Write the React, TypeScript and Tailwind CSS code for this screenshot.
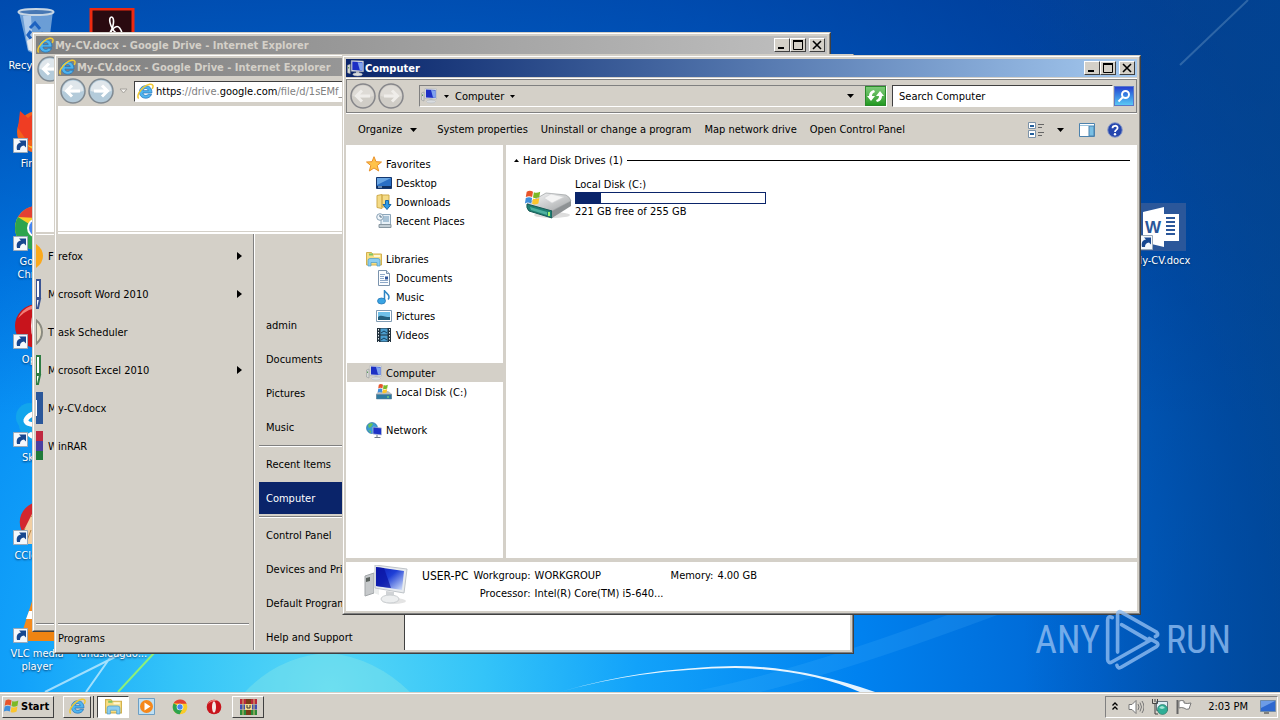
import { ReactNode } from "react";
import clsx from "clsx";

const RAISED =
  "border border-t-white border-l-white border-r-[#404040] border-b-[#404040]";
const SUNKEN =
  "border border-t-[#808080] border-l-[#808080] border-r-white border-b-white";

type IconProps = { size?: number };

const IeIcon = ({ size = 16 }: IconProps) => (
  <svg width={size} height={size} viewBox="0 0 16 16" className="shrink-0">
    <path
      d="M14 9.400H5.600c.2 1.500 1.200 2.300 2.700 2.300 1 0 1.800-.4 2.200-1.100h3.200c-.8 2.400-2.900 3.700-5.500 3.700-3.500 0-5.900-2.400-5.900-5.800s2.400-5.900 5.900-5.900c3.700 0 6 2.600 5.800 6.800zM5.700 7.200h4.900C10.400 5.900 9.500 5.200 8.200 5.200S5.900 5.900 5.700 7.200z"
      fill="#4fb4ee"
      stroke="#1f74bd"
      strokeWidth=".7"
    />
    <path
      d="M1.600 14.600C-.5 12.500 2.200 7 6.800 3.600 10.300 1 14.300.2 15 2.300c.3.900 0 2-.7 3.200"
      fill="none"
      stroke="#f0c832"
      strokeWidth="1.400"
    />
  </svg>
);

const ComputerIcon = ({ size = 16 }: IconProps) => (
  <svg width={size} height={size} viewBox="0 0 32 32" className="shrink-0">
    <path d="M1 10l5-2v18l-5-2z" fill="#d8dad8" stroke="#8b8e90" />
    <path d="M2 13h2v3H2z" fill="#5c9c5c" />
    <path d="M8 1l23 1v20L8 21z" fill="#dfe3e8" stroke="#a5acb5" />
    <path d="M10 3l19 1v16l-19-1z" fill="#1c2fc4" />
    <path d="M20 4l9 1v15l-5-1z" fill="#7fa2ee" />
    <path d="M17 21h6v4h-6z" fill="#b8bcc2" />
    <ellipse cx="20" cy="27" rx="9" ry="3" fill="#d9dcdf" stroke="#b1b5ba" />
  </svg>
);

const BigComputerIcon = () => (
  <svg width="44" height="40" viewBox="0 0 44 40" className="shrink-0">
    <defs>
      <linearGradient id="screen" x1="0" y1="0" x2="1" y2="1">
        <stop offset="0" stopColor="#0d1bb4" />
        <stop offset=".45" stopColor="#1e3fd6" />
        <stop offset="1" stopColor="#dbe8fb" />
      </linearGradient>
    </defs>
    <ellipse cx="30" cy="36" rx="12" ry="3" fill="#e4e4e4" />
    <path d="M1 11l9-3v20l-9 3z" fill="#c6c9cb" stroke="#a1a5a8" />
    <path d="M10 8l5 1v21l-5-2z" fill="#eceeee" />
    <path d="M2 13l4-1v4l-4 1z" fill="#59605d" />
    <path d="M11 0l32 4-3 24-29-5z" fill="#e8ebee" stroke="#bfc4c9" />
    <path d="M12 2l28 4-2 19-26-4z" fill="url(#screen)" />
    <path d="M12 2l8 1 7 20-15-2z" fill="#0a12a0" opacity=".7" />
    <path d="M22 26l8 1v6h-8z" fill="#d0d3d6" />
    <ellipse cx="26" cy="34" rx="9" ry="4" fill="#eceeef" stroke="#c9cdd0" />
  </svg>
);

const FlagShape = () => (
  <g>
    <path d="M3 3C6 1 8 2 10 3L9 9C7 8 5 7.500 2 9z" fill="#e8542a" />
    <path d="M11 3.500c2 1 4 1 7-.500l-1 6c-3 1.500-5 1.500-7 .500z" fill="#7cb928" />
    <path d="M2 10c3-1.500 5-1 7 0l-1 6c-2-1-4-1.500-7 0z" fill="#3f8fdc" />
    <path d="M10 10.500c2 1 4 1 7-.500l-1 6c-3 1.500-5 1.500-7 .500z" fill="#fcc52c" />
  </g>
);

const DriveIcon = () => (
  <svg width="48" height="30" viewBox="0 0 48 30" className="shrink-0">
    <defs>
      <linearGradient id="case" x1="0" y1="0" x2="1" y2="1">
        <stop offset="0" stopColor="#fafafa" />
        <stop offset="1" stopColor="#a2a5a7" />
      </linearGradient>
    </defs>
    <ellipse cx="28" cy="26" rx="18" ry="3" fill="#ddd" />
    <path d="M3 15L22 4l20 2q4 2 5 6L28 22z" fill="url(#case)" stroke="#9a9d9f" strokeWidth=".7" />
    <path d="M20 9l7-4 13 3-12 6z" fill="#f4f4f4" stroke="#d2d4d5" strokeWidth=".6" />
    <path d="M3 15l25 7v7L5 22Q2 19 3 15z" fill="#1f7f73" stroke="#155a55" />
    <path d="M28 22l19-10v5L28 29z" fill="#8e9294" />
    <path d="M6 18l17 5v3L7 21z" fill="#4fb09f" />
    <path d="M25 23v4" stroke="#9df36c" strokeWidth="2" />
    <g transform="scale(.9)">
      <FlagShape />
    </g>
  </svg>
);

const MiniDriveIcon = () => (
  <svg width="16" height="16" viewBox="0 0 16 16" className="shrink-0">
    <path d="M0 10l3-3h9l4 3v5H0z" fill="#b9bec2" />
    <path d="M.5 10.500h15v4.500H.500z" fill="#2e7aa0" stroke="#5f7f95" strokeWidth=".5" />
    <path d="M11 13h2" stroke="#8ef06a" />
    <g transform="translate(1 -1) scale(.6)">
      <FlagShape />
    </g>
  </svg>
);

const StarIcon = () => (
  <svg width="16" height="16" viewBox="0 0 16 16" className="shrink-0">
    <path
      d="M8 .700l2 5 5.500.300-4.300 3.500L12.700 15 8 12l-4.700 3 1.500-5.500L.500 6 6 5.700z"
      fill="#ffc34a"
      stroke="#e8912a"
    />
  </svg>
);

const DesktopIcon = () => (
  <svg width="16" height="16" viewBox="0 0 16 16" className="shrink-0">
    <path d="M.5 2.500h15v11H.500z" fill="#2a6fc4" stroke="#14376f" />
    <path d="M1 3h14L1 10z" fill="#6aa6e3" />
    <path d="M1 11h14v2H1z" fill="#11305f" />
    <path d="M2 12h4" stroke="#bfe2ff" />
  </svg>
);

const DownloadsIcon = () => (
  <svg width="16" height="16" viewBox="0 0 16 16" className="shrink-0">
    <path d="M1 1.500l5-1v14l-5-1zM6 1h7v12H6z" fill="#f4db87" stroke="#cfab4b" />
    <path d="M9.500 6.500h3v4h2.500L11 15.500 7 10.500h2.500z" fill="#2f9be6" stroke="#1767a8" />
  </svg>
);

const RecentIcon = () => (
  <svg width="16" height="16" viewBox="0 0 16 16" className="shrink-0">
    <path d="M5 1.500h9.500v10H5z" fill="#e7f0f7" stroke="#8ca6ba" />
    <path d="M7 4h6M7 6h6M7 8h6" stroke="#6b95b5" />
    <path d="M3 11.500h12v3H3z" fill="#c2cdd4" stroke="#8796a0" />
    <circle cx="4" cy="4" r="3.300" fill="#f1f6fa" stroke="#8aa3b5" />
    <path d="M4 2v2h2" stroke="#55738a" fill="none" />
  </svg>
);

const FolderIcon = ({ size = 16 }: IconProps) => (
  <svg width={size} height={size} viewBox="0 0 16 16" className="shrink-0">
    <path d="M.5 1.500h5l1 1.500h9v11H.500z" fill="#f6dd83" stroke="#d3b14e" />
    <path d="M3 2.500h4v2H3z" fill="#7fc463" />
    <path d="M8 4h6v2H8z" fill="#fff6d2" />
    <path
      d="M2 15V9.500Q2 7.500 4 7.500h8q2 0 2 2V15h-3v-3.500H5V15z"
      fill="#8ccdf0"
      stroke="#4b9bc8"
      strokeWidth=".7"
    />
  </svg>
);

const DocumentIcon = () => (
  <svg width="16" height="16" viewBox="0 0 16 16" className="shrink-0">
    <path d="M2.500.500h8l3 3v12h-11z" fill="#fbfdff" stroke="#7b93ad" />
    <path d="M10.500.500v3h3" fill="#d6e2ee" stroke="#7b93ad" />
    <path d="M4 4.500h5M4 6.500h4M4 8.500h4M4 10.500h8M4 12.500h8" stroke="#8fa9c8" />
    <path d="M9 6.500h3v3H9z" fill="#2e559a" />
  </svg>
);

const MusicIcon = () => (
  <svg width="16" height="16" viewBox="0 0 16 16" className="shrink-0">
    <path
      d="M8.500 12V1c.5 3 4.500 3.500 4.500 7 0 1-.5 2-1 2.500"
      fill="none"
      stroke="#2f86c4"
      strokeWidth="1.500"
    />
    <ellipse cx="5.500" cy="12" rx="4" ry="3" fill="#39a4e4" stroke="#1e6fae" strokeWidth=".7" />
  </svg>
);

const PictureIcon = () => (
  <svg width="16" height="16" viewBox="0 0 16 16" className="shrink-0">
    <path d="M.5 2.500h15v11H.500z" fill="#fff" stroke="#7f9bb3" />
    <path d="M2 4h12v8H2z" fill="#6fc0e8" />
    <path d="M2 9c3-3 6 0 12 0v3H2z" fill="#235f7d" />
  </svg>
);

const VideoIcon = () => (
  <svg width="16" height="16" viewBox="0 0 16 16" className="shrink-0">
    <path d="M1 1h14v14H1z" fill="#20303c" />
    <path d="M4.500 1.500h7v6h-7zM4.500 8.500h7v6h-7z" fill="#4c9ed0" />
    <path d="M5 6l3-2 3 2M5 13l3-2 3 2" stroke="#173f5c" fill="none" />
    <path d="M2.500 2v13M13.500 2v13" stroke="#e8eef2" strokeDasharray="1.500 1.500" />
  </svg>
);

const NetworkIcon = () => (
  <svg width="16" height="16" viewBox="0 0 16 16" className="shrink-0">
    <circle cx="6" cy="6" r="5.500" fill="#3a9bd4" stroke="#20669c" strokeWidth=".6" />
    <path d="M2 3c2-2 4-2 5-1L5 5 3 6zM2 8l3 1v2z" fill="#67c05b" />
    <path d="M7 5l8.500 1v7L7 12z" fill="#1e33c8" stroke="#b7c2d5" strokeWidth=".7" />
    <path d="M11 13v2M8.500 15.500h6" stroke="#6c7685" />
  </svg>
);

const WordShape = () => (
  <g>
    <path d="M26 11h15v27H26z" fill="#fff" />
    <path d="M28 15h9M28 19h9M28 23h9M28 27h9M28 31h9" stroke="#2b579a" strokeWidth="2" />
    <path d="M5 9l21-5v40L5 39z" fill="#fff" />
    <text x="7" y="30" fontSize="17" fontWeight="700" fill="#2b579a" fontFamily="Liberation Sans, sans-serif">
      W
    </text>
  </g>
);

const ShortcutArrow = () => (
  <g>
    <path d="M.5 32.500h14v14h-14z" fill="#f4f8fc" stroke="#9aa9b8" />
    <path d="M4 44c-1-5 1-7 4-7.500L6 34.500h7v7l-2-2c-3 .5-4 2-4 4.500z" fill="#17478f" />
  </g>
);

const shapes: Record<string, ReactNode> = {
  recycle: (
    <g>
      <path d="M6 4l34-1-5 40q-11 6-20 0z" fill="#8fb8e2" opacity=".75" />
      <path d="M10 8l8 0 2 34-5 0z" fill="#d8e8f8" opacity=".6" />
      <ellipse cx="23" cy="4" rx="17.500" ry="3" fill="#4878b4" stroke="#c7d6e4" strokeWidth="2" />
      <path d="M17 20l5-5 5 6M28 24l2 7-7 1M19 32l-4-5 3-4" fill="none" stroke="#1d62c0" strokeWidth="3" />
      <path d="M14 33l5-3 14 2 1 10q-10 6-18 0z" fill="#e7eaee" />
    </g>
  ),
  adobe: (
    <g>
      <path d="M3 1h42v45H3z" fill="#2a0a10" stroke="#ee2a10" strokeWidth="3" />
      <path
        d="M22 25C27 16 26 9 23.500 9S20.500 15 26 23"
        fill="none"
        stroke="#fff"
        strokeWidth="1.600"
      />
      <path d="M22 25q-8 5-8 9t8-9 12 0q-4 3-8-2" fill="none" stroke="#fff" strokeWidth="1.600" />
    </g>
  ),
  firefox: (
    <g>
      <circle cx="25" cy="26" r="21" fill="#f4611c" />
      <path d="M5 22L7 5l8 7 6-5 2 12 10-3v14L14 35z" fill="#ef3d23" />
      <path d="M12 38q20 10 32-14-3 22-20 22z" fill="#ffc52f" />
      <circle cx="28" cy="25" r="9" fill="#6a36b5" />
    </g>
  ),
  chrome: (
    <g>
      <circle cx="24" cy="24" r="22" fill="#f9cb28" />
      <path d="M5 13A22 22 0 0 1 44 14H24z" fill="#e34133" />
      <path d="M5 13A22 22 0 0 0 23 46l8-15-7-6z" fill="#2da44e" />
      <circle cx="24" cy="24" r="10" fill="#fff" />
      <circle cx="24" cy="24" r="8" fill="#4586f0" />
    </g>
  ),
  opera: (
    <g>
      <circle cx="24" cy="24" r="22" fill="#c8141c" />
      <path d="M5 16a22 22 0 0 1 30-11Q16 4 5 16z" fill="#f27d76" />
      <ellipse cx="24" cy="24" rx="6" ry="17" fill="#f5e9e6" />
    </g>
  ),
  skype: (
    <g>
      <circle cx="17" cy="17" r="14" fill="#12a5ec" />
      <circle cx="31" cy="31" r="14" fill="#12a5ec" />
      <circle cx="24" cy="24" r="18" fill="#12a5ec" />
      <path d="M33 16Q22 10 15 17t9 8 6 8-14 0" fill="none" stroke="#fff" strokeWidth="5" />
    </g>
  ),
  ccleaner: (
    <g>
      <path d="M40 9A20 20 0 1 0 40 39L33 32A10 10 0 1 1 33 16z" fill="#d3272f" />
      <path d="M20 14l14 8-6 24H4z" fill="#f1cfa4" />
      <path d="M18 18l13 8M12 30l-6 14M18 32l-5 13" stroke="#b98648" />
    </g>
  ),
  vlc: (
    <g>
      <path d="M20 2h8l12 38H8z" fill="#f58a1c" />
      <path d="M16 15h16l3 8H13z" fill="#fff" />
      <path d="M3 36h42l2 9H1z" fill="#ef8412" />
    </g>
  ),
  blank: <path d="M10 2h28v42H10z" fill="#eef3f8" />,
  word: (
    <g>
      <path d="M0 0h48v48H0z" fill="#2b579a" />
      <WordShape />
    </g>
  ),
};

const AppIcon = ({ name, size = 48, shortcut = false }: { name: string; size?: number; shortcut?: boolean }) => (
  <svg width={size} height={size} viewBox="0 0 48 48" className="shrink-0">
    {shapes[name]}
    {shortcut && <ShortcutArrow />}
  </svg>
);

const DesktopShortcut = ({ icon, label, shortcut = true }: { icon: string; label: string; shortcut?: boolean }) => (
  <button type="button" className="flex h-[98px] w-[74px] flex-col items-center gap-[3px] text-white">
    <AppIcon name={icon} shortcut={shortcut} />
    <span className="w-[72px] text-center leading-[13px] [text-shadow:0_1px_2px_#003060]">{label}</span>
  </button>
);

const Wallpaper = () => (
  <svg
    viewBox="0 0 1280 692"
    preserveAspectRatio="none"
    className="absolute inset-0 h-full w-full"
    aria-hidden="true"
  >
    <defs>
      <radialGradient id="sky" gradientUnits="userSpaceOnUse" cx="330" cy="690" r="1100">
        <stop offset="0" stopColor="#58d8f6" />
        <stop offset=".14" stopColor="#34c4f8" />
        <stop offset=".28" stopColor="#12a2fa" />
        <stop offset=".48" stopColor="#0082f0" />
        <stop offset=".7" stopColor="#0064d0" />
        <stop offset=".86" stopColor="#004eac" />
        <stop offset="1" stopColor="#0a488c" />
      </radialGradient>
      <linearGradient id="shade" x1="0" y1="0" x2="0" y2="1">
        <stop offset="0" stopColor="#003a98" stopOpacity=".6" />
        <stop offset=".6" stopColor="#003a98" stopOpacity="0" />
      </linearGradient>
      <linearGradient id="edge" x1="0" y1="0" x2="1" y2="0">
        <stop offset=".8" stopColor="#004490" stopOpacity="0" />
        <stop offset="1" stopColor="#004490" stopOpacity=".6" />
      </linearGradient>
    </defs>
    <path d="M0 0h1280v692H0z" fill="url(#sky)" />
    <path d="M0 0h1280v692H0z" fill="url(#shade)" />
    <path d="M0 0h1280v692H0z" fill="url(#edge)" />
    <path d="M245 692Q280 655 330 653Q375 658 410 692z" fill="#a0f0e0" opacity=".3" />
    <path d="M45 692L125 652M86 692L112 655" stroke="#d8f4ff" strokeWidth="2" opacity=".7" />
    <path d="M118 692L155 652" stroke="#8cf07a" strokeWidth="2" />
    <path d="M700 690Q800 670 950 614L1000 614Q850 670 760 692z" fill="#5cc0ff" opacity=".15" />
    <path
      d="M560 692Q640 668 735 666Q800 666 878 693L862 693Q810 669 735 668Q640 669 560 692z"
      fill="#fff"
      opacity=".9"
    />
    <path d="M1180 65L1248 0" stroke="#6f9cc8" strokeWidth="2" opacity=".4" />
  </svg>
);

const TitleButton = ({ label, children }: { label: string; children: ReactNode }) => (
  <button
    type="button"
    aria-label={label}
    className={clsx("flex h-[14px] w-[16px] items-center justify-center bg-[#d4d0c8]", RAISED)}
  >
    <svg width="12" height="12" viewBox="0 0 12 12" fill="none" stroke="#000">
      {children}
    </svg>
  </button>
);

type WindowProps = {
  title: string;
  icon: ReactNode;
  active?: boolean;
  className: string;
  children: ReactNode;
};

const Window = ({ title, icon, active = false, className, children }: WindowProps) => (
  <section
    className={clsx(
      "absolute flex flex-col border border-t-[#d4d0c8] border-r-[#404040] border-b-[#404040] border-l-[#d4d0c8]",
      className,
    )}
  >
    <div className="flex min-h-0 flex-1 flex-col border border-t-white border-r-[#808080] border-b-[#808080] border-l-white bg-[#d4d0c8] p-[2px]">
      <header
        className={clsx(
          "flex h-[18px] shrink-0 items-center gap-[1px] pr-[2px] pl-[1px] font-bold",
          active
            ? "bg-linear-to-r from-[#0a246a] to-[#a6caf0] text-white"
            : "bg-linear-to-r from-[#808080] to-[#c0c0c0] text-[#d4d0c8]",
        )}
      >
        {icon}
        <h2 className="flex-1 whitespace-nowrap">{title}</h2>
        <div className="flex">
          <TitleButton label="Minimize">
            <path d="M2 9h6" strokeWidth="2" />
          </TitleButton>
          <TitleButton label="Maximize">
            <path d="M1.500 2v8.500h9V2" />
            <path d="M1 2h10" strokeWidth="2" />
          </TitleButton>
        </div>
        <div className="pl-[2px]">
          <TitleButton label="Close">
            <path d="M2 2l8 8M10 2l-8 8" strokeWidth="1.600" />
          </TitleButton>
        </div>
      </header>
      {children}
    </div>
  </section>
);

const RoundButton = ({ label, back = false, muted = false }: { label: string; back?: boolean; muted?: boolean }) => (
  <button type="button" aria-label={label} className="shrink-0">
    <svg width="28" height="28" viewBox="0 0 28 28" fill="none">
      <circle
        cx="14"
        cy="14"
        r="12"
        fill={muted ? "#d0cdc7" : "#b4cbda"}
        stroke={muted ? "#86868a" : "#808a92"}
        strokeWidth="1.500"
      />
      <path d="M3.500 14a10.500 10.500 0 0 1 21 0q-10 3-21 0z" fill={muted ? "#dedbd6" : "#dfe6eb"} />
      <path
        d={back ? "M21 14H8M13 8.500L7.500 14l5.500 5.500" : "M7 14h13M15 8.500l5.500 5.500-5.500 5.500"}
        stroke={muted ? "#efedea" : "#fff"}
        strokeWidth="3"
      />
    </svg>
  </button>
);

const Caret = () => (
  <svg width="7" height="4" viewBox="0 0 7 4" className="shrink-0">
    <path d="M0 0h7L3.500 4z" />
  </svg>
);

const SmallCaret = () => (
  <svg width="5" height="3" viewBox="0 0 5 3" className="shrink-0">
    <path d="M0 0h5L2.500 3z" />
  </svg>
);

// The menu is painted across two windows: the back one keeps the icons and
// first letters, the front one keeps the rest of each name.
const recentPrograms = [
  { name: "refox", more: true },
  { name: "crosoft Word 2010", more: true },
  { name: "ask Scheduler", more: false },
  { name: "crosoft Excel 2010", more: true },
  { name: "y-CV.docx", more: false },
  { name: "inRAR", more: false },
];

const stripItems = [
  { letter: "F", art: <path d="M0 4q7 5 7 12T0 28z" fill="#fba91c" /> },
  { letter: "M", art: <path d="M0 2h4v18H0zM0 21h4l-2 9H0z" fill="#fff" stroke="#3a5493" strokeWidth="2" /> },
  { letter: "T", art: <path d="M0 4q6 5 6 12T0 28z" fill="#e8e1c8" stroke="#8a8a80" strokeWidth="2" /> },
  { letter: "M", art: <path d="M0 2h4v18H0zM0 21h4l-2 9H0z" fill="#fff" stroke="#2f7d43" strokeWidth="2" /> },
  {
    letter: "M",
    art: (
      <g>
        <path d="M0 0h7v32H0z" fill="#2b579a" />
        <path d="M0 8h1v16H0z" fill="#fff" />
      </g>
    ),
  },
  {
    letter: "W",
    art: (
      <g>
        <path d="M0 1h7v10H0z" fill="#c02840" />
        <path d="M0 11h7v10H0z" fill="#4a3fa0" />
        <path d="M0 21h7v9H0z" fill="#1f7a3a" />
      </g>
    ),
  },
];

const places = [
  ["admin", "Documents", "Pictures", "Music"],
  ["Recent Items", "Computer"],
  ["Control Panel", "Devices and Printers", "Default Programs", "Help and Support"],
];

const StartMenu = () => (
  <div className="flex h-[416px] w-[347px] border-r border-[#404040] bg-[#d4d0c8]">
    <div className="flex w-[196px] flex-col border-r border-[#808080]">
      <ul className="flex-1 pt-[3px]">
        {recentPrograms.map(({ name, more }) => (
          <li key={name} className="flex h-[38px] items-center justify-between pr-[11px]">
            <button type="button">{name}</button>
            {more && (
              <svg width="5" height="8" viewBox="0 0 5 8">
                <path d="M0 0l5 4-5 4z" />
              </svg>
            )}
          </li>
        ))}
      </ul>
      <div className="mr-1 h-[27px] border-t border-[#808080] pt-2 shadow-[inset_0_1px_#fff]">
        <button type="button">Programs</button>
      </div>
    </div>
    <div className="flex flex-1 flex-col border-l border-white pt-[75px] pl-1">
      {places.map((group, index) => (
        <ul
          key={index}
          className={clsx(index > 0 && "border-t border-[#808080] pt-[2px] shadow-[inset_0_1px_#fff]")}
        >
          {group.map((place) => (
            <li key={place} className="h-[34px]">
              <button
                type="button"
                className={clsx(
                  "h-8 w-full pl-[7px] text-left",
                  place === "Computer" && "bg-[#0a246a] text-white",
                )}
              >
                {place}
              </button>
            </li>
          ))}
        </ul>
      ))}
    </div>
  </div>
);

const BackBrowser = () => (
  <Window
    title="My-CV.docx - Google Drive - Internet Explorer"
    icon={<IeIcon size={17} />}
    className="top-[32px] left-[32px] h-[600px] w-[799px]"
  >
    <div className="flex h-[30px] shrink-0 items-center">
      <RoundButton label="Back" back />
    </div>
    <div className="h-[148px] shrink-0 bg-white" />
    <div className="mt-[2px] flex flex-1 flex-col border-t border-white pt-[2px]">
      <ul className="flex-1">
        {stripItems.map(({ letter, art }, index) => (
          <li key={index} className="flex h-[38px] items-center gap-[5px]">
            <svg width="7" height="32" viewBox="0 0 7 32" className="shrink-0">
              {art}
            </svg>
            {letter}
          </li>
        ))}
      </ul>
      <div className="h-[5px] border-t border-[#808080] shadow-[inset_0_1px_#fff]" />
    </div>
  </Window>
);

const FrontBrowser = () => (
  <Window
    title="My-CV.docx - Google Drive - Internet Explorer"
    icon={<IeIcon size={17} />}
    className="top-[54px] left-[54px] h-[600px] w-[800px]"
  >
    <nav className="flex h-[30px] shrink-0 items-center pl-[1px]">
      <RoundButton label="Back" back />
      <RoundButton label="Forward" />
      <svg width="19" height="6" viewBox="0 0 19 6" fill="none" stroke="#a5a29c">
        <path d="M5 1h7L8.500 5z" fill="#f2f0ec" />
      </svg>
      <div
        className="flex h-[21px] flex-1 items-center gap-[2px] border border-t-[#404040] border-r-white border-b-white border-l-[#404040] bg-white pl-[2px]"
      >
        <IeIcon size={17} />
        <span className="whitespace-nowrap text-[#808080]">
          <span className="text-black">https</span>://drive.<span className="text-black">google.com</span>
          /file/d/1sEMf_
        </span>
      </div>
    </nav>
    <div className="flex min-h-0 flex-1 flex-col bg-white">
      <div className="h-[125px] shrink-0" />
      <div className="h-[3px] w-[347px] shrink-0 border-t border-[#d4d0c8]" />
      <StartMenu />
    </div>
  </Window>
);

type NavGroup = {
  name: string;
  icon: ReactNode;
  selected?: boolean;
  items: { name: string; icon: ReactNode }[];
};

const navGroups: NavGroup[] = [
  {
    name: "Favorites",
    icon: <StarIcon />,
    items: [
      { name: "Desktop", icon: <DesktopIcon /> },
      { name: "Downloads", icon: <DownloadsIcon /> },
      { name: "Recent Places", icon: <RecentIcon /> },
    ],
  },
  {
    name: "Libraries",
    icon: <FolderIcon />,
    items: [
      { name: "Documents", icon: <DocumentIcon /> },
      { name: "Music", icon: <MusicIcon /> },
      { name: "Pictures", icon: <PictureIcon /> },
      { name: "Videos", icon: <VideoIcon /> },
    ],
  },
  {
    name: "Computer",
    icon: <ComputerIcon />,
    selected: true,
    items: [{ name: "Local Disk (C:)", icon: <MiniDriveIcon /> }],
  },
  { name: "Network", icon: <NetworkIcon />, items: [] },
];

const commands = ["System properties", "Uninstall or change a program", "Map network drive", "Open Control Panel"];

const disk = { name: "Local Disk (C:)", free: 221, total: 255 };

const Explorer = () => (
  <Window
    title="Computer"
    icon={<ComputerIcon size={17} />}
    active
    className="top-[55px] left-[342px] h-[560px] w-[799px]"
  >
    <div className="mt-[1px] flex h-[36px] shrink-0 items-center gap-[5px] border-t border-b border-t-white border-b-white px-[3px] shadow-[inset_0_1px_#808080,inset_0_-1px_#808080,inset_1px_0_#808080,inset_-1px_0_#808080]">
      <div className="flex">
        <RoundButton label="Back" back muted />
        <RoundButton label="Forward" muted />
      </div>
      <div className={clsx("ml-[9px] flex h-[22px] flex-1 items-center pl-[1px]", SUNKEN)}>
        <ComputerIcon />
        <span className="ml-[7px] flex flex-1 items-center gap-[6px]">
          <SmallCaret />
          Computer
          <SmallCaret />
        </span>
        <Caret />
        <button
          type="button"
          aria-label="Refresh"
          className="ml-[11px] flex h-5 w-[21px] items-center justify-center border border-[#2b8a2b] bg-linear-to-b from-[#7ccb78] to-[#1f9a1f]"
        >
          <svg width="17" height="14" viewBox="0 0 17 14" fill="#fff">
            <path d="M0 7h2Q2 2 7 1L8 3Q5 4 5 7h3L4 12zM17 7h-2q0 5-5 6l-1-2q3-1 3-4H9l4-5z" />
          </svg>
        </button>
      </div>
      <div className="flex items-center gap-[1px]">
        <input
          aria-label="Search Computer"
          defaultValue="Search Computer"
          className="h-[22px] w-[221px] border border-t-[#404040] border-r-white border-b-white border-l-[#404040] bg-white px-[6px] outline-none"
        />
        <button
          type="button"
          aria-label="Search"
          className="flex h-5 w-5 items-center justify-center border border-[#5a78c8] bg-linear-to-b from-[#2a3fd0] to-[#5cc8f4]"
        >
          <svg width="14" height="14" viewBox="0 0 14 14" fill="none" stroke="#fff" strokeWidth="2">
            <circle cx="8.500" cy="5.500" r="3.500" />
            <path d="M6 8l-4.500 4.500" />
          </svg>
        </button>
      </div>
    </div>

    <div className="flex h-[31px] shrink-0 items-center gap-[13px] pr-[14px] pl-3 whitespace-nowrap">
      <button type="button" className="flex items-center gap-2 pr-[7px]">
        Organize
        <Caret />
      </button>
      {commands.map((command) => (
        <button key={command} type="button">
          {command}
        </button>
      ))}
      <div className="ml-auto flex items-center gap-3">
        <button type="button" aria-label="Change your view" className="flex items-center gap-[13px]">
          <svg width="16" height="16" viewBox="0 0 16 16">
            <path d="M.5.500h7v6h-7zM.500 8.500h7v7h-7z" fill="#fff" stroke="#7d93a8" />
            <path d="M2 4h4M2 12h4" stroke="#235f9c" strokeWidth="2" />
            <path d="M10 2.500h6M10 5.500h4M10 10.500h6M10 13.500h4" stroke="#666" />
          </svg>
          <Caret />
        </button>
        <button type="button" aria-label="Show the preview pane" className="ml-[3px]">
          <svg width="16" height="14" viewBox="0 0 16 14">
            <path d="M.5.500h15v13H.500z" fill="#fff" stroke="#4d82ad" />
            <path d="M10 3h5v10h-5z" fill="#79bfe4" stroke="#4d82ad" />
            <path d="M1 2.500h14" stroke="#9cc3dd" />
          </svg>
        </button>
        <button type="button" aria-label="Get help">
          <svg width="16" height="16" viewBox="0 0 16 16">
            <circle cx="8" cy="8" r="7.300" fill="#2546ae" stroke="#8c9cc8" />
            <path
              d="M5.500 6.200C5.500 3 10.600 3 10.600 6 10.600 8 8 7.800 8 10"
              fill="none"
              stroke="#fff"
              strokeWidth="1.800"
            />
            <circle cx="8" cy="12.300" r="1.200" fill="#fff" />
          </svg>
        </button>
      </div>
    </div>

    <div className="flex min-h-0 flex-1">
      <nav className="flex w-[160px] shrink-0 flex-col gap-[19px] border-r-[3px] border-[#d4d0c8] bg-white pt-[9px] pl-[1px]">
        {navGroups.map(({ name, icon, selected, items }) => (
          <div key={name}>
            <a
              href="#"
              className={clsx("flex h-[19px] items-center gap-1 pt-[1px] pl-[19px]", selected && "bg-[#d4d0c8]")}
            >
              {icon}
              {name}
            </a>
            {items.map((item) => (
              <a key={item.name} href="#" className="flex h-[19px] items-center gap-1 pt-[1px] pl-[29px]">
                {item.icon}
                {item.name}
              </a>
            ))}
          </div>
        ))}
      </nav>
      <main className="flex-1 bg-white pt-2 pr-[7px] pl-2">
        <div className="flex h-[15px] items-center gap-1">
          <svg width="5" height="3" viewBox="0 0 5 3">
            <path d="M0 3h5L2.500 0z" />
          </svg>
          <h3>Hard Disk Drives (1)</h3>
          <div className="h-px flex-1 bg-black" />
        </div>
        <div className="mt-[9px] flex items-end gap-[3px] pl-[10px]">
          <DriveIcon />
          <div className="w-[191px]">
            <div className="leading-[15px]">{disk.name}</div>
            <div className="h-3 border border-[#0a246a]">
              <div
                className="h-full bg-[#0a246a]"
                style={{ width: `${(1 - disk.free / disk.total) * 100}%` }}
              />
            </div>
            <div className="leading-[15px]">
              {disk.free} GB free of {disk.total} GB
            </div>
          </div>
        </div>
      </main>
    </div>

    <footer className="flex h-[53px] shrink-0 gap-[14px] border-t-4 border-[#d4d0c8] bg-white pt-[3px] pl-[18px]">
      <BigComputerIcon />
      <div className="flex gap-[5px] pt-[2px] leading-[18px] whitespace-nowrap">
        <div className="text-xs leading-[18px]">USER-PC</div>
        <dl className="grid h-9 grid-cols-[auto_132px_auto_auto] gap-x-1">
          <dt className="text-right">Workgroup:</dt>
          <dd>WORKGROUP</dd>
          <dt>Memory:</dt>
          <dd>4.00 GB</dd>
          <dt className="text-right">Processor:</dt>
          <dd>Intel(R) Core(TM) i5-640...</dd>
        </dl>
      </div>
    </footer>
  </Window>
);

const Watermark = () => (
  <div className="pointer-events-none absolute right-[49px] bottom-[20px] flex items-center gap-1 font-['Roboto_Condensed','Open_Sans_Condensed','Liberation_Sans_Narrow',sans-serif] text-[38px] text-[#8fbdf2] opacity-80">
    <span>ANY</span>
    <svg
      width="58"
      height="63"
      viewBox="325 150 175 190"
      fill="none"
      stroke="currentColor"
      strokeWidth="11"
      strokeLinecap="round"
    >
      <path d="M350 176Q336 168 336 184V302Q337 317 350 309L462 246 378 197" />
      <path d="M366 280V166Q367 154 378 160L484 220Q492 228 480 233" />
      <path d="M364 320Q367 332 378 325L484 263Q492 256 482 250L462 239" />
    </svg>
    <span>RUN</span>
  </div>
);

const Taskbar = () => (
  <footer className="relative flex h-7 shrink-0 items-center border-t border-[#d4d0c8] bg-[#d4d0c8] px-[2px] shadow-[inset_0_1px_#fff]">
    <button
      type="button"
      className={clsx("flex h-[22px] w-[52px] items-center gap-[1px] font-bold", RAISED)}
    >
      <svg width="17" height="17" viewBox="0 0 20 20">
        <FlagShape />
      </svg>
      Start
    </button>
    <div className="ml-[9px] flex items-center">
      <div className="flex border-r border-[#404040] pr-[2px]">
        <button
          type="button"
          aria-label="Internet Explorer"
          className={clsx("flex h-[22px] w-7 items-center justify-center", RAISED)}
        >
          <IeIcon size={17} />
        </button>
      </div>
      <button
        type="button"
        aria-label="Windows Explorer"
        className="ml-[3px] flex h-[22px] w-8 items-center justify-center border border-t-[#404040] border-r-white border-b-white border-l-[#404040] bg-white"
      >
        <FolderIcon size={17} />
      </button>
      <button type="button" aria-label="Media Player" className="ml-[9px]">
        <svg width="17" height="17" viewBox="0 0 17 17">
          <path d="M.5.500h16v16H.500z" fill="#bfe0f4" stroke="#6d9fc4" />
          <circle cx="8.500" cy="8.500" r="6.500" fill="#f5881c" />
          <path d="M6.500 4.500l6 4-6 4z" fill="#fff" />
        </svg>
      </button>
      <button type="button" aria-label="Chrome" className="ml-[17px]">
        <AppIcon name="chrome" size={16} />
      </button>
      <button type="button" aria-label="Opera" className="ml-[18px]">
        <AppIcon name="opera" size={16} />
      </button>
      <button
        type="button"
        aria-label="WinRAR"
        className={clsx("ml-[10px] flex h-[22px] w-8 items-center justify-center", RAISED)}
      >
        <svg width="17" height="16" viewBox="0 0 17 16">
          <path d="M0 0h17v5H0z" fill="#b8283c" />
          <path d="M0 5.500h17v5H0z" fill="#3f4fb0" />
          <path d="M0 11h17v5H0z" fill="#2c8a3a" />
          <path d="M3 0v16M14 0v16" stroke="#d8c070" />
          <path d="M6 0h5v16H6z" fill="#7a3d18" />
          <path d="M5 5h7v6H5z" fill="#f0d890" />
          <path d="M7 6v3h3V6" stroke="#333" fill="none" />
        </svg>
      </button>
    </div>
    <div className={clsx("ml-auto flex h-[22px] items-center pr-[1px] pl-[6px]", SUNKEN)}>
      <svg width="6" height="9" viewBox="0 0 6 9" fill="none" stroke="#000" strokeWidth="1.300">
        <path d="M.5 3.500L3 1l2.500 2.500M.500 7.500L3 5l2.500 2.500" />
      </svg>
      <div className="ml-[10px] flex gap-2">
        <svg width="16" height="16" viewBox="0 0 16 16" fill="none" stroke="#777">
          <path d="M1 5.500h3l4-4v13l-4-4H1z" fill="#fff" />
          <path d="M10 5q2 3 0 6M12 3.500q3 4.500 0 9M14 2q4 6 0 12" />
        </svg>
        <svg width="16" height="16" viewBox="0 0 16 16">
          <path d="M4.500 2.500h11v9h-11z" fill="#dfeef5" stroke="#66767f" />
          <path d="M.5 0v4.500h5V0M3 0v3M3 5v10h3" fill="none" stroke="#444" />
          <circle cx="10.500" cy="10.500" r="5" fill="#2fae96" stroke="#29705f" strokeWidth=".6" />
          <path d="M7 9q3-4 6 0l-3 1z" fill="#9fe6d4" />
        </svg>
        <svg width="16" height="16" viewBox="0 0 16 16">
          <path d="M1.500 1v14" stroke="#666" strokeWidth="2" />
          <path d="M3 2q3-1 5 0v2q3 1 7 0l-2 6q-3 1-5-1-3-1-5 0z" fill="#fff" stroke="#777" />
        </svg>
      </div>
      <time className="ml-4">2:03 PM</time>
      <button type="button" aria-label="Show desktop" className="ml-3">
        <svg width="16" height="14" viewBox="0 0 16 14">
          <path d="M.5.500h15v11H.500z" fill="#2d68cf" stroke="#6f8ba8" />
          <path d="M1 1h14L1 8z" fill="#6c9ce6" />
          <path d="M4 13h5" stroke="#333" />
        </svg>
      </button>
    </div>
  </footer>
);

const App = () => (
  <div className="flex h-screen w-full flex-col overflow-hidden font-['DejaVu_Sans_Condensed','DejaVu_Sans',sans-serif] text-[11px] leading-[13px] text-black">
    <div className="relative min-h-0 flex-1 overflow-hidden bg-[#0078e0]">
      <Wallpaper />
      <div className="absolute top-[8px] left-0 flex flex-col">
        <DesktopShortcut icon="recycle" label="Recycle Bin" shortcut={false} />
        <DesktopShortcut icon="firefox" label="Firefox" />
        <DesktopShortcut icon="chrome" label="Google Chrome" />
        <DesktopShortcut icon="opera" label="Opera" />
        <DesktopShortcut icon="skype" label="Skype" />
        <DesktopShortcut icon="ccleaner" label="CCleaner" />
        <DesktopShortcut icon="vlc" label="VLC media player" />
      </div>
      <div className="absolute top-[8px] left-[75px] flex flex-col gap-[490px]">
        <DesktopShortcut icon="adobe" label="" shortcut={false} />
        <DesktopShortcut icon="blank" label="fundsleagdo..." shortcut={false} />
      </div>
      <div className="absolute top-[203px] left-[1125px]">
        <DesktopShortcut icon="word" label="My-CV.docx" />
      </div>
      <BackBrowser />
      <FrontBrowser />
      <Explorer />
      <Watermark />
    </div>
    <Taskbar />
  </div>
);

export default App;
